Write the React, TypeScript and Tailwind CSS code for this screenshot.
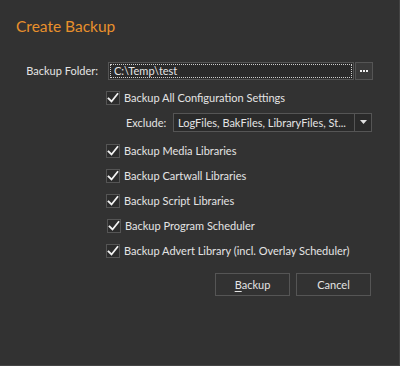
import React from 'react';

const Check = () => (
  <svg width="12" height="12" viewBox="0 0 12 12" fill="none">
    <path d="M1.5 6.5 L4.5 9.5 L10.5 2" stroke="#f2f2f2" strokeWidth="1.8" strokeLinecap="square" />
  </svg>
);

const CheckRow = ({ label, className = '' }: { label: string; className?: string }) => (
  <div className={`flex items-center gap-[4px] h-[16px] ${className}`}>
    <div className="w-[14px] h-[14px] border border-[#555] bg-[#2c2c2c] flex items-center justify-center">
      <Check />
    </div>
    <span>{label}</span>
  </div>
);

export default function App() {
  return (
    <div
      className="w-[400px] h-[366px] bg-[#323232] border-r border-b border-[#444] text-[#e4e4e4] text-[11px] leading-none"
      style={{ fontFamily: 'Lato, "Liberation Sans", sans-serif' }}
    >
      <div className="pl-[16px] pt-[19px] text-[15.5px] text-[#e8902c]">Create Backup</div>

      <div className="mt-[27px] flex items-center">
        <div className="w-[108px] text-right pr-[10px]">Backup Folder:</div>
        <div className="flex items-center">
          <div className="w-[246px] h-[18px] bg-[#2a2a2a] border border-[#555] p-[1px]">
            <div className="w-full h-full border border-dotted border-[#cfcfcf] flex items-center pl-[3px]">C:\Temp\test</div>
          </div>
          <div className="w-[18px] h-[18px] ml-[1px] bg-[#3a3a3a] border border-[#555] flex items-center justify-center gap-[1px]">
            <div className="w-[2px] h-[2px] bg-[#eee]" />
            <div className="w-[2px] h-[2px] bg-[#eee]" />
            <div className="w-[2px] h-[2px] bg-[#eee]" />
          </div>
        </div>
      </div>

      <div className="pl-[106px] mt-[10px]">
        <CheckRow label="Backup All Configuration Settings" />
      </div>

      <div className="mt-[7px] flex items-center pl-[126px]">
        <span className="w-[47px]">Exclude:</span>
        <div className="flex w-[199px] h-[19px] border border-[#555] bg-[#2a2a2a]">
          <div className="flex-1 flex items-center pl-[4px] overflow-hidden whitespace-nowrap">LogFiles, BakFiles, LibraryFiles, St...</div>
          <div className="w-[17px] border-l border-[#555] flex items-center justify-center">
            <svg width="7" height="4" viewBox="0 0 7 4"><path d="M0 0 H7 L3.5 4 Z" fill="#e0e0e0" /></svg>
          </div>
        </div>
      </div>

      <div className="pl-[106px] mt-[11px] flex flex-col gap-[9px]">
        <CheckRow label="Backup Media Libraries" />
        <CheckRow label="Backup Cartwall Libraries" />
        <CheckRow label="Backup Script Libraries" />
        <CheckRow label="Backup Program Scheduler" className="pl-[1px]" />
        <CheckRow label="Backup Advert Library (incl. Overlay Scheduler)" />
      </div>

      <div className="mt-[14px] flex justify-end gap-[6px] pr-[28px]">
        <button className="w-[75px] h-[23px] border border-[#555] bg-[#323232] text-[#e4e4e4]">
          <span className="underline underline-offset-2">B</span>ackup
        </button>
        <button className="w-[75px] h-[23px] border border-[#555] bg-[#323232] text-[#e4e4e4]">Cancel</button>
      </div>
    </div>
  );
}
